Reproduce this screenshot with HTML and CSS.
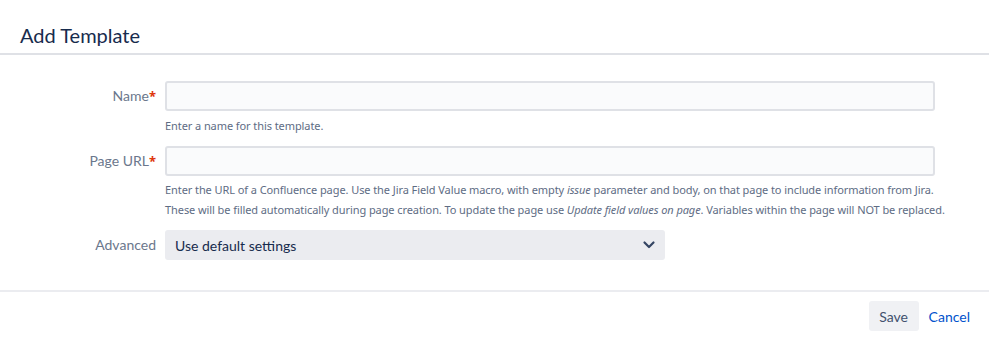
FILE: index.html
```html
<!DOCTYPE html>
<html lang="en">
<head>
  <meta charset="UTF-8" />
  <title>Add Template</title>
  <link rel="stylesheet" href="styles.css">
</head>
<body>
  <div class="dialog">
    <div class="dialog-header">
      <h2>Add Template</h2>
    </div>
    <form class="dialog-body">
      <div class="field-group">
        <label for="tplName">Name<span class="req">*</span></label>
        <div class="field">
          <input type="text" id="tplName" class="text-input">
          <div class="description">Enter a name for this template.</div>
        </div>
      </div>
      <div class="field-group">
        <label for="tplUrl">Page URL<span class="req">*</span></label>
        <div class="field">
          <input type="text" id="tplUrl" class="text-input">
          <div class="description long">
            Enter the URL of a Confluence page. Use the Jira Field Value macro, with empty <em>issue</em> parameter and body, on that page to include information from Jira.<br>
            These will be filled automatically during page creation. To update the page use <em>Update field values on page</em>. Variables within the page will NOT be replaced.
          </div>
        </div>
      </div>
      <div class="field-group">
        <label for="tplAdvanced">Advanced</label>
        <div class="field">
          <div class="select" id="tplAdvanced">
            <span>Use default settings</span>
            <svg class="chevron" width="14" height="14" viewBox="0 0 14 14">
              <path d="M2.5 4.5 L7 9 L11.5 4.5" fill="none" stroke="#344563" stroke-width="2.2" stroke-linecap="round" stroke-linejoin="round"/>
            </svg>
          </div>
        </div>
      </div>
    </form>
    <div class="dialog-footer">
      <button type="button" class="btn">Save</button>
      <a href="#" class="btn-link">Cancel</a>
    </div>
  </div>
</body>
</html>
```

FILE: styles.css
```css
:root {
  --text-dark: #172B4D;
  --text-subtle: #6B778C;
  --border: #DFE1E6;
  --gray-light: #EBECF0;
  --link: #0052CC;
}
* { box-sizing: border-box; }
body {
  margin: 0;
  font-family: Lato, "Noto Sans", sans-serif;
  color: var(--text-dark);
  background: #fff;
}
.dialog-header {
  height: 55px;
  padding: 0 20px;
  border-bottom: 2px solid var(--border);
}
.dialog-header h2 {
  margin: 0;
  font-size: 20px;
  font-weight: 400;
  color: var(--text-dark);
  padding-top: 23px;
  line-height: 24px;
}
.dialog-body {
  padding: 26px 54px 30px 0;
  border-bottom: 2px solid var(--gray-light);
}
.field-group {
  display: grid;
  grid-template-columns: 156px minmax(0, 1fr);
  column-gap: 9px;
  margin-bottom: 10px;
}
.field-group:last-child { margin-bottom: 0; }
.field-group label {
  text-align: right;
  font-size: 14px;
  line-height: 30px;
  color: var(--text-subtle);
}
.field-group label .req {
  color: #DE350B;
  font-family: "Noto Sans", sans-serif;
  font-weight: 700;
  font-size: 13px;
}
.text-input {
  display: block;
  width: 100%;
  height: 30px;
  background: #FAFBFC;
  border: 2px solid var(--border);
  border-radius: 3px;
  font: inherit;
  font-size: 14px;
}
.description {
  margin-top: 5px;
  font-family: "Noto Sans", sans-serif;
  font-size: 11px;
  line-height: 20px;
  color: #5E6C84;
  letter-spacing: -0.08px;
  white-space: nowrap;
}
.description.long { margin-top: 4px; }
.select {
  width: 500px;
  height: 30px;
  background: var(--gray-light);
  border-radius: 3px;
  display: flex;
  align-items: center;
  justify-content: space-between;
  padding: 0 9px 0 10px;
  font-size: 14px;
  color: var(--text-dark);
}
.dialog-footer {
  display: flex;
  justify-content: flex-end;
  align-items: center;
  gap: 10px;
  padding: 9px 19px 0 0;
}
.btn {
  height: 30px;
  width: 50px;
  border: none;
  border-radius: 3px;
  background: #F0F1F4;
  color: #42526E;
  font: inherit;
  font-size: 14px;
  padding: 0;
}
.btn-link {
  color: var(--link);
  text-decoration: none;
  font-size: 14px;
}
```
